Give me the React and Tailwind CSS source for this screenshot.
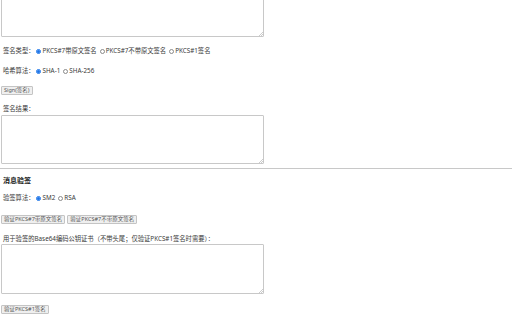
const Radio = ({ checked, label }) => (
  <span className="inline-flex items-center mr-[2px]">
    {checked ? (
      <span className="w-[5px] h-[5px] rounded-full border border-[#1a73e8] bg-white flex items-center justify-center mx-[1px]">
        <span className="w-[3px] h-[3px] rounded-full bg-[#1a73e8]" />
      </span>
    ) : (
      <span className="w-[5px] h-[5px] rounded-full border border-[#8a8a8a] bg-white mx-[1px]" />
    )}
    <span>{label}</span>
  </span>
)

const Btn = ({ children }) => (
  <button className="h-[9px] px-[2px] border border-[#c4c4c4] bg-[#efefef] text-[5.5px] leading-[7px] text-[#555] rounded-[1px]">
    {children}
  </button>
)

const Area = ({ className }) => (
  <div className={`relative w-[263px] ${className}`}>
    <textarea className="block w-full h-full resize-none border border-[#c8c8c8] rounded-[1px] bg-white" />
    <svg className="absolute right-[1px] bottom-[1px] w-[4px] h-[4px]" viewBox="0 0 4 4">
      <path d="M4 0 L0 4 M4 2 L2 4" stroke="#aaa" strokeWidth="0.6" />
    </svg>
  </div>
)

export default function App() {
  return (
    <div className="w-[512px] h-[320px] overflow-hidden bg-white text-[#3a3a3a] text-[6.3px] leading-[8px]" style={{ fontFamily: '"Noto Sans", "Noto Sans CJK SC", sans-serif' }}>
      <div className="px-[1px]">
        <Area className="h-[57px] -mt-[20px]" />
      </div>
      <div className="pl-[3px]">
        <div className="mt-[10px] flex items-center h-[8px]">
          <span className="mr-[1px]">签名类型：</span>
          <Radio checked label="PKCS#7带原文签名" />
          <Radio label="PKCS#7不带原文签名" />
          <Radio label="PKCS#1签名" />
        </div>
        <div className="mt-[12px] flex items-center h-[8px]">
          <span className="mr-[1px]">哈希算法：</span>
          <Radio checked label="SHA-1" />
          <Radio label="SHA-256" />
        </div>
      </div>
      <div className="pl-[1px] mt-[11px] flex">
        <Btn>Sign(签名)</Btn>
      </div>
      <div className="pl-[3px] mt-[10px] h-[8px]">签名结果：</div>
      <div className="px-[1px] mt-[2px]">
        <Area className="h-[49px]" />
      </div>
      <div className="mt-[4px] border-t border-[#c8c8c8]" />
      <div className="pl-[3px] mt-[8px] h-[8px] font-bold text-[7px] text-[#222]">消息验签</div>
      <div className="pl-[3px] mt-[9px] flex items-center h-[8px]">
        <span className="mr-[1px]">验签算法：</span>
        <Radio checked label="SM2" />
        <Radio label="RSA" />
      </div>
      <div className="pl-[1px] mt-[13px] flex gap-[2px]">
        <Btn>验证PKCS#7带原文签名</Btn>
        <Btn>验证PKCS#7不带原文签名</Btn>
      </div>
      <div className="pl-[3px] mt-[11px] h-[8px]">用于验签的Base64编码公钥证书（不带头尾；仅验证PKCS#1签名时需要）：</div>
      <div className="px-[1px] mt-[1px]">
        <Area className="h-[50px]" />
      </div>
      <div className="pl-[1px] mt-[11px] flex">
        <Btn>验证PKCS#1签名</Btn>
      </div>
    </div>
  )
}
